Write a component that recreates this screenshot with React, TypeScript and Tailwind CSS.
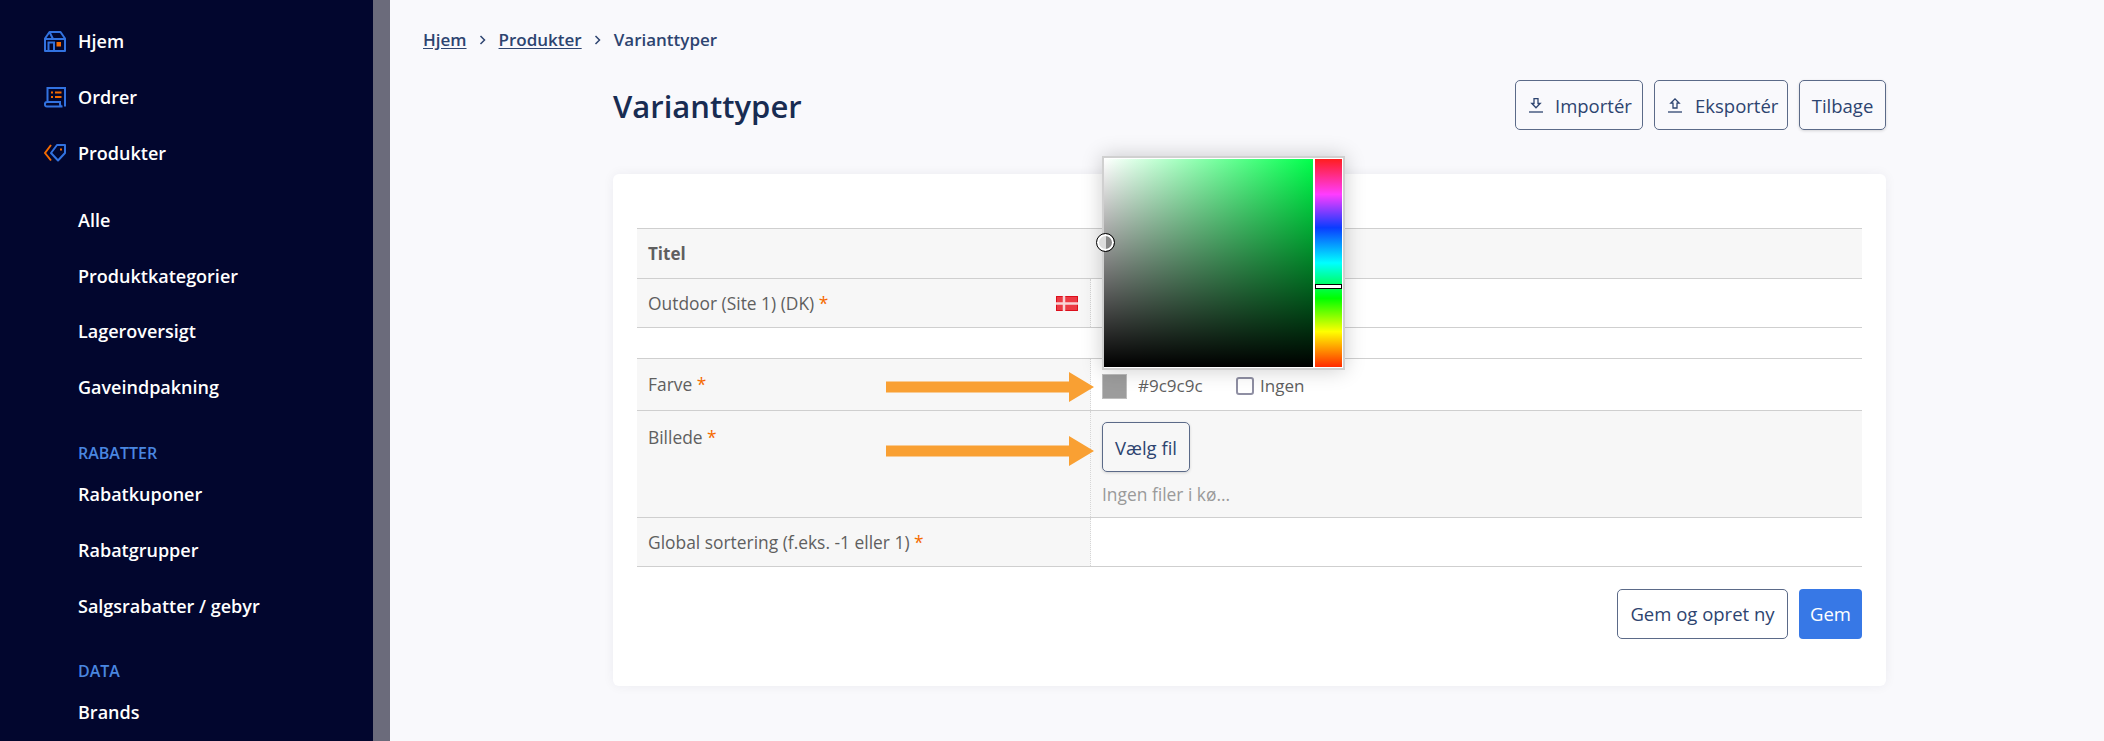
import React from "react";

const font = { fontFamily: '"Open Sans", "Noto Sans", sans-serif' };

const HomeIcon = () => (
  <svg width="22" height="21" viewBox="0 0 22 21" fill="none">
    <path d="M1 20V7.500L5.500 1h11L21 7.500V20z" stroke="#3272e0" strokeWidth="2" strokeLinejoin="round" />
    <path d="M1 8h20M5.500 1L9 8M4.500 20v-8.500H10V20" stroke="#3272e0" strokeWidth="2" />
    <rect x="12.500" y="11" width="4.500" height="4.500" fill="#f56a00" />
  </svg>
);

const OrderIcon = () => (
  <svg width="22" height="21" viewBox="0 0 22 21" fill="none">
    <path d="M3.500 14V1h17.500v18.500" stroke="#3272e0" strokeWidth="2" />
    <path d="M1 17a2 2 0 0 1 2-2h13v2a2.500 2.500 0 0 0 2.500 2.500H3a2 2 0 0 1-2-2.500z" stroke="#3272e0" strokeWidth="2" />
    <path d="M7 5.500h2M11 5.500h6.500M7 10h2M11 10h6.500" stroke="#f56a00" strokeWidth="2" />
  </svg>
);

const TagIcon = () => (
  <svg width="22" height="18" viewBox="0 0 22 18" fill="none">
    <path d="M7 1L1 9l6 7.500" stroke="#f56a00" strokeWidth="2" />
    <path d="M13 1h8v8l-7 7.500L7 9z" stroke="#3272e0" strokeWidth="2" strokeLinejoin="round" />
    <rect x="16" y="4.500" width="2" height="2" fill="#f56a00" />
  </svg>
);

const ImportIcon = () => (
  <svg width="14" height="15" viewBox="0 0 14 15" fill="none" stroke="#2d4470" strokeWidth="1.300">
    <path d="M5 .700h4v4.800h2.200L7 9.800 2.800 5.500H5z" />
    <path d="M0 14h14" />
  </svg>
);

const ExportIcon = () => (
  <svg width="14" height="15" viewBox="0 0 14 15" fill="none" stroke="#2d4470" strokeWidth="1.300">
    <path d="M5 10h4V5.200h2.200L7 .900 2.800 5.200H5z" />
    <path d="M0 14h14" />
  </svg>
);

const Chevron = () => (
  <svg width="8" height="10" viewBox="0 0 8 10" fill="none" className="mx-[12px]">
    <path d="M1.500 1l4 4-4 4" stroke="#2d4470" strokeWidth="1.500" />
  </svg>
);

const Arrow = ({ top }: { top: string }) => (
  <svg width="208" height="30" viewBox="0 0 208 30" className={`absolute right-[-4px] ${top}`}>
    <path d="M0 9.500h183V0l25 15-25 15v-9.500H0z" fill="#f9a033" />
  </svg>
);

const Flag = () => (
  <svg width="22" height="15" viewBox="0 0 22 15" className="mr-[1px]">
    <rect width="22" height="15" fill="#dc0f1c" />
    <rect x="1" y="1" width="20" height="13" fill="#ec3a44" />
    <path d="M0 7.500h22M8 0v15" stroke="#f8d4d6" strokeWidth="2.500" />
  </svg>
);

const Star = () => <span className="text-[#f56a00]">*</span>;

function NavItem({ icon, label }: { icon?: React.ReactNode; label: string }) {
  return (
    <div className="flex h-[55.8px] shrink-0 items-center text-[18px] font-semibold text-white">
      <span className="flex w-[78px] shrink-0 justify-end pr-[12px]">{icon}</span>
      {label}
    </div>
  );
}

function NavHeading({ label }: { label: string }) {
  return (
    <div className="mt-[23px] flex h-[28px] shrink-0 items-center pl-[78px] text-[16px] font-semibold text-[#4a86e0]">
      {label}
    </div>
  );
}

function Sidebar() {
  return (
    <aside className="flex h-full w-[373px] shrink-0 flex-col overflow-hidden bg-[#02062e] pt-[14px]">
      <NavItem icon={<HomeIcon />} label="Hjem" />
      <NavItem icon={<OrderIcon />} label="Ordrer" />
      <NavItem icon={<TagIcon />} label="Produkter" />
      <div className="h-[11px] shrink-0" />
      <NavItem label="Alle" />
      <NavItem label="Produktkategorier" />
      <NavItem label="Lageroversigt" />
      <NavItem label="Gaveindpakning" />
      <NavHeading label="RABATTER" />
      <NavItem label="Rabatkuponer" />
      <NavItem label="Rabatgrupper" />
      <NavItem label="Salgsrabatter / gebyr" />
      <NavHeading label="DATA" />
      <NavItem label="Brands" />
    </aside>
  );
}

const outlineBtn =
  "flex h-[50px] items-center rounded-[5px] border border-[#5b6a88] text-[18.5px] text-[#2d4470]";

function Row({
  label,
  height,
  shaded,
  arrowTop,
  children,
  alignTop,
}: {
  label: React.ReactNode;
  height: string;
  shaded?: boolean;
  arrowTop?: string;
  alignTop?: boolean;
  children?: React.ReactNode;
}) {
  return (
    <div className={`flex border-b border-[#cfcfcf] ${height}`}>
      <div
        className={`relative flex w-[454px] shrink-0 justify-between border-r border-dotted border-[#d6d6d6] bg-[#f7f7f7] px-[11px] text-[17.4px] text-[#5f5f5f] ${alignTop ? "items-start pt-[13px]" : "items-center"}`}
      >
        {label}
        {arrowTop && <Arrow top={arrowTop} />}
      </div>
      <div className={`grow ${shaded ? "bg-[#f7f7f7]" : "bg-white"}`}>{children}</div>
    </div>
  );
}

function ColorPicker() {
  return (
    <div className="absolute left-[1102px] top-[156px] z-10 flex h-[214px] w-[243px] gap-[2px] border-2 border-[#d0d0d0] bg-white py-[1px] pr-[1px] shadow-[0_0_20px_rgba(0,0,0,0.2)]">
      <div
        className="relative h-full w-[209px]"
        style={{
          background:
            "linear-gradient(to top, #000, transparent), linear-gradient(to right, #fff, #00ff4c)",
        }}
      >
        <div className="absolute left-[-8px] top-[74px] h-[19px] w-[19px] rounded-full border border-black bg-[linear-gradient(90deg,#ddd_50%,#888_50%)] shadow-[inset_0_0_0_2px_#fff]" />
      </div>
      <div
        className="relative h-full grow"
        style={{
          background:
            "linear-gradient(to bottom, #ff1e1e 0%, #ff3cff 17%, #0a3cff 33%, #00ffff 50%, #00ff00 67%, #ffff00 83%, #ff2a00 100%)",
        }}
      >
        <div className="absolute inset-x-0 top-[125px] h-[5px] border border-black bg-white" />
      </div>
    </div>
  );
}

function Card() {
  return (
    <div className="mt-[44px] rounded-[6px] bg-white px-[24px] pb-[47px] pt-[54px] shadow-[0_0_12px_rgba(20,20,60,0.06)]">
      <div className="border-t border-[#cfcfcf]">
        <div className="flex h-[50px] items-center border-b border-[#cfcfcf] bg-[#f7f7f7] px-[11px] text-[17px] font-bold text-[#5f5f5f]">
          Titel
        </div>
        <Row
          height="h-[49px]"
          label={
            <>
              <span>
                Outdoor (Site 1) (DK) <Star />
              </span>
              <Flag />
            </>
          }
        />
      </div>
      <div className="mt-[30px] border-t border-[#cfcfcf]">
        <Row
          height="h-[52px]"
          arrowTop="top-[13px]"
          label={
            <span>
              Farve <Star />
            </span>
          }
        >
          <div className="flex h-full items-center pl-[11px] pt-[3px] text-[17px] text-[#5f5f5f]">
            <span className="h-[25px] w-[25px] border border-[#bdbdbd] bg-[#9c9c9c]" />
            <span className="ml-[11px] w-[98px]">#9c9c9c</span>
            <span className="h-[18px] w-[18px] rounded-[3px] border-2 border-[#8f8fa3] bg-white" />
            <span className="ml-[6px]">Ingen</span>
          </div>
        </Row>
        <Row
          height="h-[107px]"
          shaded
          arrowTop="top-[25px]"
          alignTop
          label={
            <span>
              Billede <Star />
            </span>
          }
        >
          <div className="pl-[11px] pt-[11px]">
            <button className={`${outlineBtn} w-[88px] justify-center bg-transparent pt-[2px] shadow-[0_1px_3px_rgba(0,0,0,0.15)]`}>
              Vælg fil
            </button>
            <div className="mt-[9px] text-[17.4px] text-[#9a9a9a]">Ingen filer i kø...</div>
          </div>
        </Row>
        <Row
          height="h-[49px]"
          label={
            <span>
              Global sortering (f.eks. -1 eller 1) <Star />
            </span>
          }
        />
      </div>
      <div className="mt-[22px] flex justify-end gap-[11px]">
        <button className={`${outlineBtn} w-[171px] justify-center bg-white`}>Gem og opret ny</button>
        <button className="flex h-[50px] w-[63px] items-center justify-center rounded-[4px] bg-[#3778e6] text-[18.5px] text-white">
          Gem
        </button>
      </div>
    </div>
  );
}

export default function App() {
  return (
    <div className="relative flex h-[741px] w-[2104px] overflow-hidden" style={font}>
      <Sidebar />
      <div className="w-[17px] shrink-0 bg-[#6b6b7b]" />
      <main className="grow bg-[#f9f9fc] pl-[33px] pt-[28px]">
        <nav className="flex h-[24px] items-center text-[17px] font-semibold text-[#2d4470]">
          <a className="underline underline-offset-2">Hjem</a>
          <Chevron />
          <a className="underline underline-offset-2">Produkter</a>
          <Chevron />
          <span>Varianttyper</span>
        </nav>
        <div className="ml-[190px] w-[1273px]">
          <div className="mt-[28px] flex items-center justify-between">
            <h1 className="mt-[2px] text-[31px] font-semibold text-[#182c52]">Varianttyper</h1>
            <div className="flex gap-[11px]">
              <button className={`${outlineBtn} w-[128px] gap-[12px] pl-[13px] pt-[1px]`}>
                <ImportIcon />
                Importér
              </button>
              <button className={`${outlineBtn} w-[134px] gap-[13px] pl-[13px] pt-[1px]`}>
                <ExportIcon />
                Eksportér
              </button>
              <button className={`${outlineBtn} w-[87px] justify-center pt-[1px] shadow-[0_1px_3px_rgba(0,0,0,0.15)]`}>
                Tilbage
              </button>
            </div>
          </div>
          <Card />
        </div>
      </main>
      <ColorPicker />
    </div>
  );
}
